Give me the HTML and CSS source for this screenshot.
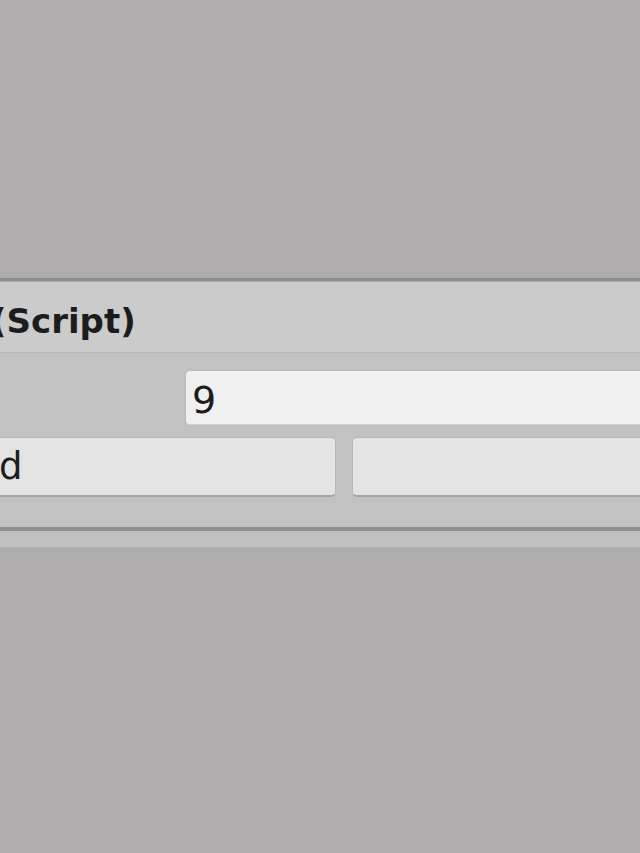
FILE: index.html
```html
<!DOCTYPE html>
<html lang="en">
<head>
    <meta charset="UTF-8">
    <meta name="viewport" content="width=device-width, initial-scale=1.0">
    <title>Inspector</title>
    <link rel="stylesheet" href="styles.css">
</head>
<body>
    <div class="inspector">
        <div class="empty-area"></div>
        <div class="component">
            <div class="component-header">
                <span class="component-title">(Script)</span>
            </div>
            <div class="component-body">
                <div class="field-row">
                    <div class="field-label"></div>
                    <div class="field-input">9</div>
                </div>
                <div class="button-row">
                    <button class="btn btn-left">d</button>
                    <button class="btn btn-right"></button>
                </div>
            </div>
        </div>
        <div class="component-footer"></div>
        <div class="empty-area"></div>
    </div>
</body>
</html>
```

FILE: styles.css
```css
body {
    margin: 0;
    background-color: #aeacad;
    font-family: "DejaVu Sans", "Liberation Sans", sans-serif;
    color: #1c1c1c;
    overflow: hidden;
}
.inspector {
    width: 640px;
    height: 853px;
    overflow: hidden;
}
.empty-area {
    height: 278px;
}
.component {
    border-top: 3px solid #8f8f8f;
    background-color: #c2c2c2;
}
.component-header {
    height: 72px;
    background-color: #cbcbcb;
    border-top: 1px solid #a8a8a8;
    border-bottom: 1px solid #b7b7b7;
    display: flex;
    align-items: center;
    padding: 7px 0 0 4px;
    box-sizing: border-box;
}
.component-title {
    margin-left: -13px;
    font-size: 34px;
    font-weight: bold;
    white-space: nowrap;
}
.component-body {
    padding: 17px 0 30px 0;
    border-bottom: 4px solid #8f8f8f;
}
.field-row {
    display: flex;
    height: 55px;
}
.field-label {
    flex: 0 0 185px;
}
.field-input {
    flex: 1;
    margin-right: -20px;
    background-color: #f0f0f0;
    border: 1px solid #b9b9b9;
    border-bottom-color: #d2d2d2;
    border-radius: 5px;
    padding: 5px 0 0 6px;
    font-size: 38px;
    line-height: 48px;
}
.button-row {
    display: flex;
    gap: 16px;
    margin-top: 12px;
    margin-left: -64px;
    margin-right: -40px;
}
.btn {
    height: 60px;
    background-color: #e3e3e3;
    border: 1px solid #b8b8b8;
    border-bottom: 2px solid #a2a2a2;
    border-radius: 5px;
    font-family: inherit;
    font-size: 37px;
    color: #1c1c1c;
    text-align: left;
    padding: 0 0 0 62px;
    line-height: 56px;
}
.btn-left {
    flex: 0 0 400px;
}
.btn-right {
    flex: 1;
}
.component-footer {
    height: 16px;
    background-color: #c0c0c0;
    border-bottom: 1px solid #b2b2b2;
}
```
